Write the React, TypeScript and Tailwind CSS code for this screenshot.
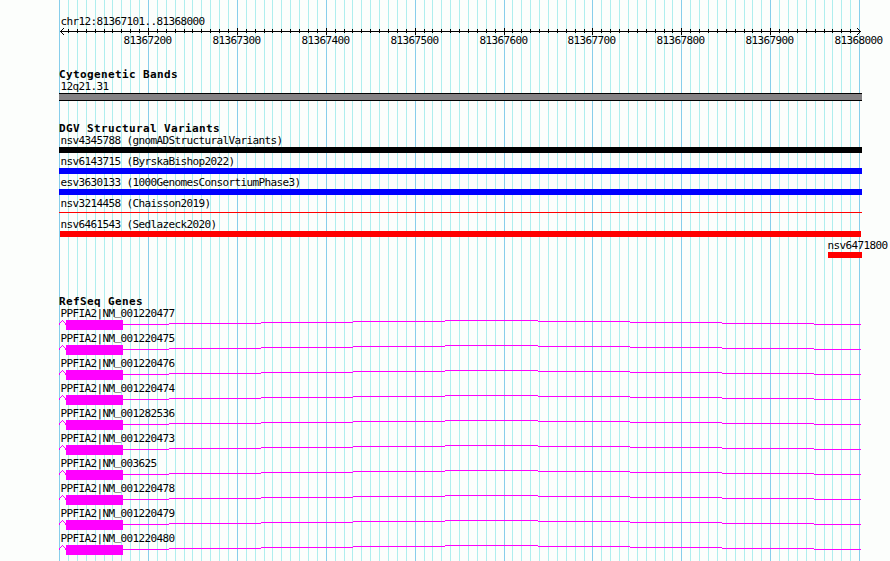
const LEFT = 59;

// one grid line every 10 bp
const gridLines = Array.from({ length: 91 }, (_, i) => ({
  x: Math.floor(59.6 + (i * 80) / 9),
  major: i % 10 === 0,
  bp: 81367100 + i * 10,
}));

const variants = [
  { name: "nsv4345788 (gnomADStructuralVariants)", labelClass: "pl-[60.4px]", barClass: "ml-[59px] w-[803px] h-1.5 bg-black" },
  { name: "nsv6143715 (ByrskaBishop2022)", labelClass: "pl-[60.4px]", barClass: "ml-[59px] w-[803px] h-1.5 bg-[#0000ff]" },
  { name: "esv3630133 (1000GenomesConsortiumPhase3)", labelClass: "pl-[60.4px]", barClass: "ml-[59px] w-[803px] h-1.5 bg-[#0000ff]" },
  { name: "nsv3214458 (Chaisson2019)", labelClass: "pl-[60.4px]", barClass: "ml-[59px] w-[803px] mt-0.5 h-px bg-[#ff0000]" },
  { name: "nsv6461543 (Sedlazeck2020)", labelClass: "pl-[60.4px]", barClass: "ml-[60px] w-[801px] h-1.5 bg-[#ff0000]" },
  { name: "nsv6471800", labelClass: "pl-[827.4px]", barClass: "ml-[828px] w-[34px] h-1.5 bg-[#ff0000]" },
];

const genes = [
  "001220477",
  "001220475",
  "001220476",
  "001220474",
  "001282536",
  "001220473",
  "003625",
  "001220478",
  "001220479",
  "001220480",
];

// the intron line climbs one pixel per segment and comes back down
const intron = [
  { x: 123, end: 169, y: 4 },
  { x: 169, end: 261, y: 3 },
  { x: 261, end: 353, y: 2 },
  { x: 353, end: 445, y: 1 },
  { x: 445, end: 538, y: 0 },
  { x: 538, end: 630, y: 1 },
  { x: 630, end: 722, y: 2 },
  { x: 722, end: 814, y: 3 },
  { x: 814, end: 861, y: 4 },
];

function Grid() {
  return (
    <svg className="absolute inset-0" width="890" height="561" shapeRendering="crispEdges">
      {gridLines.map((line) => (
        <rect key={line.x} x={line.x} y={0} width={1} height={561} fill={line.major ? "#87ceeb" : "#afeeee"} />
      ))}
    </svg>
  );
}

function Label({ children, className = "pl-[60.4px]" }: any) {
  return (
    <div className={`h-3 whitespace-pre text-[11px] leading-[14px] tracking-[-0.622px] ${className}`}>
      {children}
    </div>
  );
}

function Title({ children }: any) {
  return (
    <h2 className="h-3 whitespace-pre pl-[59px] text-[11px] font-bold leading-[14px] tracking-[0.378px]">
      {children}
    </h2>
  );
}

function Ruler() {
  return (
    <svg className="block" width="890" height="21" shapeRendering="crispEdges">
      <rect x={LEFT + 1} y={4} width={801} height={1} />
      {gridLines.slice(1, -1).map((line) => (
        <rect key={line.x} x={line.x} y={line.major ? 1 : 2} width={1} height={line.major ? 7 : 4} />
      ))}
      {[0, 1, 2, 3].map((i) => (
        <g key={i}>
          <rect x={60 + i} y={4 - i} width={1} height={1} />
          <rect x={60 + i} y={4 + i} width={1} height={1} />
          <rect x={860 - i} y={4 - i} width={1} height={1} />
          <rect x={860 - i} y={4 + i} width={1} height={1} />
        </g>
      ))}
      {gridLines
        .filter((line, i) => line.major && i > 0)
        .map((line) => (
          <text key={line.bp} x={line.x - 24.6} y={17} className="text-[11px] tracking-[-0.622px]">
            {line.bp}
          </text>
        ))}
    </svg>
  );
}

function Gene() {
  return (
    <svg className="mt-px mb-0.5 block" width="890" height="10" shapeRendering="crispEdges" fill="#ff00ff">
      <rect x={59} y={3} width={1} height={2} />
      <rect x={60} y={2} width={1} height={1} />
      <rect x={61} y={1} width={1} height={1} />
      <rect x={62} y={0} width={1} height={1} />
      <rect x={63} y={1} width={1} height={1} />
      <rect x={64} y={2} width={1} height={1} />
      <rect x={65} y={3} width={1} height={2} />
      <rect x={66} y={0} width={57} height={10} />
      {intron.map((part) => (
        <rect key={part.x} x={part.x} y={part.y} width={part.end - part.x} height={1} />
      ))}
    </svg>
  );
}

export default function App() {
  return (
    <div className="relative h-[561px] w-[890px] overflow-hidden bg-[#fcfefc] font-['DejaVu_Sans_Mono',monospace] text-black">
      <Grid />
      <main className="relative flex flex-col pt-[15px]">
        <Label>chr12:81367101..81368000</Label>
        <Ruler />

        <section className="mt-5">
          <Title>Cytogenetic Bands</Title>
          <Label>12q21.31</Label>
          <div className="mt-px ml-[59px] h-2 w-[803px] border-y border-black bg-[#848284]"></div>
        </section>

        <section className="mt-[21px]">
          <Title>DGV Structural Variants</Title>
          {variants.map((item) => (
            <div key={item.name} className="h-[21px]">
              <Label className={item.labelClass}>{item.name}</Label>
              <div className="flex pt-px">
                <div className={item.barClass}></div>
              </div>
            </div>
          ))}
        </section>

        <section className="mt-[35px]">
          <Title>RefSeq Genes</Title>
          {genes.map((id) => (
            <div key={id}>
              <Label>
                PPFIA2|NM<span className="relative -top-0.5">_</span>{id}
              </Label>
              <Gene />
            </div>
          ))}
        </section>
      </main>
    </div>
  );
}
